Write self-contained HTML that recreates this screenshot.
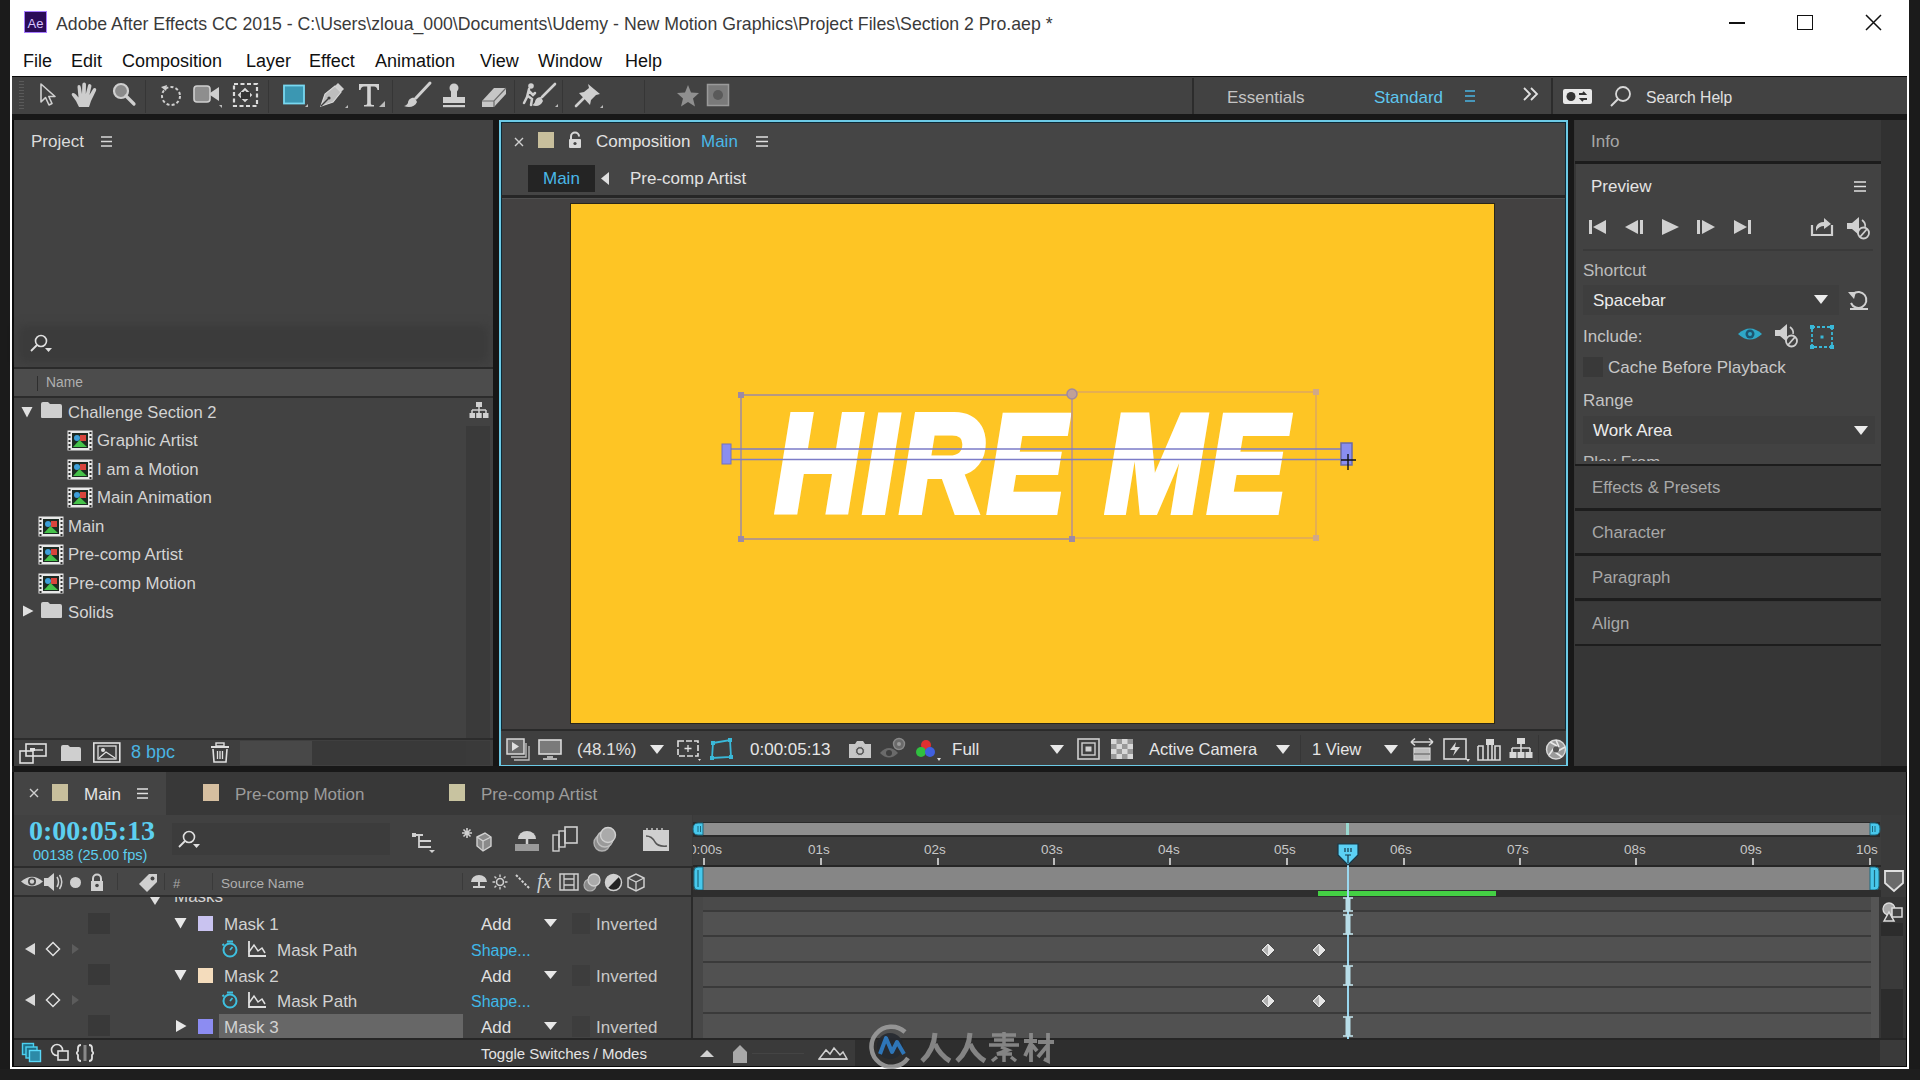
<!DOCTYPE html>
<html><head><meta charset="utf-8">
<style>
*{margin:0;padding:0;box-sizing:border-box}
html,body{width:1920px;height:1080px;overflow:hidden;background:#1e1e1e;font-family:"Liberation Sans",sans-serif;position:relative}
.a{position:absolute}
.t{position:absolute;white-space:nowrap;font-family:"Liberation Sans",sans-serif;line-height:1}
</style></head><body>

<div class="a" style="left:0px;top:0px;width:10px;height:1080px;background:#1b1b1b;"></div>
<div class="a" style="left:10px;top:0px;width:1900px;height:1070px;background:#ffffff;"></div>
<div class="a" style="left:1909px;top:0px;width:11px;height:1080px;background:#1b1b1b;"></div>
<div class="a" style="left:0px;top:1069px;width:1920px;height:11px;background:#1e1e1e;"></div>
<div class="a" style="left:12px;top:76px;width:1895px;height:991px;background:#0a0a0a;"></div>
<div class="a" style="left:24px;top:11px;width:23px;height:22px;background:#2b0c58;border:1px solid #a77bff"></div>
<div class="t" style="left:27.5px;top:17.0px;font-size:13px;color:#d9c4ff;">Ae</div>
<div class="t" style="left:56px;top:16.0px;font-size:17.7px;color:#3a3a3a;">Adobe After Effects CC 2015 - C:\Users\zloua_000\Documents\Udemy - New Motion Graphics\Project Files\Section 2 Pro.aep *</div>
<div class="t" style="left:23px;top:51.8px;font-size:18px;color:#101010;">File</div>
<div class="t" style="left:71px;top:51.8px;font-size:18px;color:#101010;">Edit</div>
<div class="t" style="left:122px;top:51.8px;font-size:18px;color:#101010;">Composition</div>
<div class="t" style="left:246px;top:51.8px;font-size:18px;color:#101010;">Layer</div>
<div class="t" style="left:309px;top:51.8px;font-size:18px;color:#101010;">Effect</div>
<div class="t" style="left:375px;top:51.8px;font-size:18px;color:#101010;">Animation</div>
<div class="t" style="left:480px;top:51.8px;font-size:18px;color:#101010;">View</div>
<div class="t" style="left:538px;top:51.8px;font-size:18px;color:#101010;">Window</div>
<div class="t" style="left:625px;top:51.8px;font-size:18px;color:#101010;">Help</div>
<div class="a" style="left:1729px;top:22px;width:16px;height:2px;background:#111;"></div>
<div class="a" style="left:1797px;top:15px;width:16px;height:15px;background:transparent;border:1.5px solid #111"></div>
<svg class="a" style="left:1865px;top:14px;" width="17" height="17" viewBox="0 0 17 17"><path d="M1 1 L16 16 M16 1 L1 16" stroke="#111" stroke-width="1.5"/></svg>
<div class="a" style="left:12px;top:77px;width:1895px;height:37px;background:#424242;"></div>
<div class="a" style="left:12px;top:114px;width:1895px;height:6px;background:#181818;"></div>
<div class="a" style="left:19px;top:81px;width:5px;height:1px;background:#5a5a5a;"></div>
<div class="a" style="left:19px;top:84px;width:5px;height:1px;background:#5a5a5a;"></div>
<div class="a" style="left:19px;top:87px;width:5px;height:1px;background:#5a5a5a;"></div>
<div class="a" style="left:19px;top:90px;width:5px;height:1px;background:#5a5a5a;"></div>
<div class="a" style="left:19px;top:93px;width:5px;height:1px;background:#5a5a5a;"></div>
<div class="a" style="left:19px;top:96px;width:5px;height:1px;background:#5a5a5a;"></div>
<div class="a" style="left:19px;top:99px;width:5px;height:1px;background:#5a5a5a;"></div>
<div class="a" style="left:19px;top:102px;width:5px;height:1px;background:#5a5a5a;"></div>
<div class="a" style="left:19px;top:105px;width:5px;height:1px;background:#5a5a5a;"></div>
<div class="a" style="left:19px;top:108px;width:5px;height:1px;background:#5a5a5a;"></div>
<svg class="a" style="left:38px;top:82px;" width="22" height="26" viewBox="0 0 22 26"><path d="M3 2 L3 20 L7.5 15.5 L11 23 L14 21.5 L10.8 14.5 L17 14.5 Z" fill="none" stroke="#d0d0d0" stroke-width="1.6" stroke-linejoin="round"/></svg>
<svg class="a" style="left:70px;top:81px;" width="30" height="28" viewBox="0 0 30 28"><g fill="#cdcdcd"><path d="M9 26 L6 20 L2 14.5 Q1 12.5 3 12 Q4.5 11.8 6 13.5 L8.5 16.5 L7.5 6 Q7.3 4 9 4 Q10.6 4 10.8 6 L12 13 L12.3 3.5 Q12.4 1.5 14.2 1.5 Q16 1.5 16 3.5 L15.8 13 L18 4.5 Q18.5 2.8 20.2 3.2 Q21.8 3.7 21.4 5.5 L19.4 14 L23 8 Q24 6.5 25.5 7.3 Q26.8 8.2 26 9.8 L21 20 L19 26 Z"/></g></svg>
<svg class="a" style="left:110px;top:81px;" width="28" height="28" viewBox="0 0 28 28"><circle cx="11" cy="10" r="7" fill="#8a8a8a" stroke="#cfcfcf" stroke-width="2.2"/><path d="M16 15 L24 23" stroke="#cfcfcf" stroke-width="3.2" stroke-linecap="round"/></svg>
<div class="a" style="left:145px;top:80px;width:1px;height:33px;background:#363636;"></div>
<svg class="a" style="left:157px;top:81px;" width="28" height="28" viewBox="0 0 28 28"><circle cx="14" cy="15" r="9" fill="none" stroke="#cfcfcf" stroke-width="2" stroke-dasharray="3 2.2"/><path d="M4 6 L10 4 L9 10 Z" fill="#cfcfcf"/></svg>
<svg class="a" style="left:192px;top:82px;" width="32" height="28" viewBox="0 0 32 28"><rect x="2" y="4" width="16" height="16" rx="3" fill="#8e8e8e" stroke="#cfcfcf" stroke-width="1.6"/><path d="M18 11 L27 5 L27 19 L18 13 Z" fill="#cfcfcf"/><path d="M27 23 L30 23 L30 26 Z" fill="#bbb"/></svg>
<svg class="a" style="left:231px;top:81px;" width="30" height="30" viewBox="0 0 30 30"><rect x="3" y="3" width="23" height="22" fill="none" stroke="#dcdcdc" stroke-width="2.2" stroke-dasharray="4 2.5"/><path d="M8 14 L14 8 L20 14 L14 20 Z" fill="none" stroke="#dcdcdc" stroke-width="1.8"/><rect x="10" y="11" width="9" height="7" fill="#333"/></svg>
<div class="a" style="left:268px;top:80px;width:1px;height:33px;background:#363636;"></div>
<svg class="a" style="left:281px;top:83px;" width="28" height="28" viewBox="0 0 28 28"><rect x="3" y="2.5" width="20" height="18" fill="#3b97b2" stroke="#78d8f0" stroke-width="1.8"/><path d="M24 24 L27 21 L27 24 Z" fill="#bbb"/></svg>
<svg class="a" style="left:317px;top:80px;" width="32" height="32" viewBox="0 0 32 32"><path d="M4 26 L8 14 L18 6 L24 12 L16 22 Z" fill="#bdbdbd" stroke="#d8d8d8" stroke-width="1.2"/><path d="M18 6 L21 3 L27 9 L24 12" fill="#d0d0d0"/><path d="M4 26 L11 19" stroke="#3e3e3e" stroke-width="1.5"/><circle cx="12" cy="18" r="1.6" fill="#3e3e3e"/><path d="M28 28 L31 25 L31 28 Z" fill="#bbb"/></svg>
<svg class="a" style="left:357px;top:82px;" width="24" height="26" viewBox="0 0 24 26"><path d="M2 2 H22 V8 H20.5 Q20 4.5 17 4.5 H13.8 V21.5 Q13.8 23 16 23 H17 V24.5 H7 V23 H8 Q10.2 23 10.2 21.5 V4.5 H7 Q4 4.5 3.5 8 H2 Z" fill="#d2d2d2"/></svg>
<svg class="a" style="left:378px;top:100px;" width="8" height="8" viewBox="0 0 8 8"><path d="M1 7 L7 1 L7 7 Z" fill="#bbb"/></svg>
<div class="a" style="left:392px;top:80px;width:1px;height:33px;background:#363636;"></div>
<svg class="a" style="left:401px;top:80px;" width="32" height="32" viewBox="0 0 32 32"><path d="M29 3 L15 18" stroke="#d0d0d0" stroke-width="3" stroke-linecap="round"/><path d="M14 18 C10 17 7 20 7 23 C6 25 4 26 3 26 C8 28 14 27 16 22 Z" fill="#cfcfcf"/></svg>
<svg class="a" style="left:440px;top:80px;" width="30" height="32" viewBox="0 0 30 32"><circle cx="14" cy="8" r="4.5" fill="#cfcfcf"/><path d="M11 11 L17 11 L17 17 L11 17 Z" fill="#cfcfcf"/><rect x="3" y="17" width="22" height="6" fill="#cfcfcf"/><rect x="3" y="25" width="22" height="2.2" fill="#cfcfcf"/></svg>
<svg class="a" style="left:479px;top:82px;" width="30" height="28" viewBox="0 0 30 28"><path d="M3 19 L15 6 L27 6 L27 12 L15 25 L3 25 Z" fill="#c6c6c6"/><path d="M3 19 L15 19 L27 6 M15 19 L15 25" stroke="#6a6a6a" stroke-width="1.2" fill="none"/></svg>
<div class="a" style="left:514px;top:80px;width:1px;height:33px;background:#363636;"></div>
<svg class="a" style="left:522px;top:80px;" width="38" height="32" viewBox="0 0 38 32"><circle cx="9" cy="6" r="2.8" fill="#cfcfcf"/><path d="M7 9 L5 17 L2 23 M7 11 L11 15 L13 13 M6 16 L10 19 L9 25" stroke="#cfcfcf" stroke-width="2.5" fill="none" stroke-linecap="round"/><path d="M33 4 L20 17" stroke="#d0d0d0" stroke-width="2.6" stroke-linecap="round"/><path d="M19 17 C15 17 13 20 13 22 C12 24 11 25 10 25 C14 27 19 26 21 21 Z" fill="#cfcfcf"/><path d="M33 27 L36 24 L36 27 Z" fill="#bbb"/></svg>
<div class="a" style="left:562px;top:80px;width:1px;height:33px;background:#363636;"></div>
<svg class="a" style="left:573px;top:80px;" width="32" height="32" viewBox="0 0 32 32"><path d="M15 4 L27 14 L23 15 L18 20 L17 25 L6 13 L11 12 L16 8 Z" fill="#cfcfcf"/><path d="M11 18 L3 26" stroke="#cfcfcf" stroke-width="2.6" stroke-linecap="round"/><path d="M27 28 L30 25 L30 28 Z" fill="#bbb"/></svg>
<div class="a" style="left:644px;top:80px;width:1px;height:33px;background:#363636;"></div>
<svg class="a" style="left:676px;top:84px;" width="24" height="24" viewBox="0 0 24 24"><path d="M12 1 L15 8.5 L23 9 L17 14.5 L19 22.5 L12 18 L5 22.5 L7 14.5 L1 9 L9 8.5 Z" fill="#8f8f8f"/></svg>
<svg class="a" style="left:706px;top:83px;" width="24" height="24" viewBox="0 0 24 24"><rect x="1.5" y="1.5" width="21" height="21" fill="#7a7a7a" stroke="#9a9a9a" stroke-width="1.5"/><circle cx="12" cy="12" r="5" fill="#5a5a5a"/></svg>
<div class="a" style="left:1192px;top:78px;width:2px;height:36px;background:#2c2c2c;"></div>
<div class="t" style="left:1227px;top:88.6px;font-size:17px;color:#c4c4c4;">Essentials</div>
<div class="t" style="left:1374px;top:88.6px;font-size:17px;color:#5ec6ee;">Standard</div>
<svg class="a" style="left:1464px;top:89px;" width="12" height="14" viewBox="0 0 12 14"><path d="M1 2 H11 M1 7 H11 M1 12 H11" stroke="#4ab4e2" stroke-width="1.6"/></svg>
<svg class="a" style="left:1522px;top:86px;" width="18" height="16" viewBox="0 0 18 16"><path d="M2 2 L8 8 L2 14 M9 2 L15 8 L9 14" stroke="#e0e0e0" stroke-width="1.8" fill="none"/></svg>
<div class="a" style="left:1551px;top:78px;width:2px;height:36px;background:#2c2c2c;"></div>
<svg class="a" style="left:1562px;top:87px;" width="32" height="20" viewBox="0 0 32 20"><rect x="1" y="2" width="29" height="15" rx="2" fill="#e8e8e8"/><circle cx="9" cy="9.5" r="4.5" fill="#333"/><path d="M17 7 L23 7 L21 5 M25 12 L19 12 L21 14" stroke="#333" stroke-width="1.8" fill="none"/></svg>
<svg class="a" style="left:1609px;top:85px;" width="24" height="24" viewBox="0 0 24 24"><circle cx="14" cy="9" r="7" fill="none" stroke="#d8d8d8" stroke-width="1.8"/><path d="M9 14 L2 21" stroke="#d8d8d8" stroke-width="2"/></svg>
<div class="t" style="left:1646px;top:89.7px;font-size:15.7px;color:#e0e0e0;">Search Help</div>
<div class="a" style="left:14px;top:120px;width:479px;height:646px;background:#424242;"></div>
<div class="t" style="left:31px;top:132.6px;font-size:17px;color:#dcdcdc;">Project</div>
<svg class="a" style="left:100px;top:135px;" width="13" height="13" viewBox="0 0 13 13"><path d="M1 2 H12 M1 6.5 H12 M1 11 H12" stroke="#d8d8d8" stroke-width="1.5"/></svg>
<div class="a" style="left:24px;top:331px;width:459px;height:26px;background:#3b3b3b;box-shadow:0 0 8px 5px #3b3b3b"></div>
<svg class="a" style="left:28px;top:332px;" width="32" height="24" viewBox="0 0 32 24"><circle cx="13" cy="9" r="5.5" fill="none" stroke="#e0e0e0" stroke-width="1.6"/><path d="M9 13 L3 19" stroke="#e0e0e0" stroke-width="1.8"/><path d="M17 16 L24 16 L20.5 20 Z" fill="#e0e0e0"/></svg>
<div class="a" style="left:14px;top:367px;width:479px;height:2px;background:#2a2a2a;"></div>
<div class="a" style="left:14px;top:369px;width:479px;height:27px;background:#4c4c4c;"></div>
<div class="a" style="left:37px;top:376px;width:1px;height:15px;background:#2e2e2e;"></div>
<div class="t" style="left:46px;top:376.3px;font-size:13.8px;color:#b0b0b0;">Name</div>
<div class="a" style="left:14px;top:396px;width:479px;height:2px;background:#2c2c2c;"></div>
<div class="a" style="left:466px;top:426px;width:24px;height:312px;background:#3a3a3a;"></div>
<svg class="a" style="left:469px;top:401px;" width="20" height="20" viewBox="0 0 20 20"><rect x="7" y="1" width="6" height="5" fill="#d0d0d0"/><path d="M10 6 V9 M3 9 H17 M3 9 V12 M10 9 V12 M17 9 V12" stroke="#d0d0d0" stroke-width="1.5" fill="none"/><rect x="0.5" y="12" width="5.5" height="5" fill="#d0d0d0"/><rect x="7.2" y="12" width="5.5" height="5" fill="#d0d0d0"/><rect x="14" y="12" width="5.5" height="5" fill="#d0d0d0"/></svg>
<svg class="a" style="left:21px;top:406px;" width="12" height="12" viewBox="0 0 12 12"><path d="M0.5 1 L11.5 1 L6.0 11.5 Z" fill="#e0e0e0"/></svg>
<svg class="a" style="left:40px;top:401px;" width="23" height="18" viewBox="0 0 23 18"><path d="M1 3 Q1 1 3 1 L8 1 L10 3 L20 3 Q22 3 22 5 L22 16 Q22 17 21 17 L2 17 Q1 17 1 16 Z" fill="#cfcfcf"/></svg>
<div class="t" style="left:68px;top:404.9px;font-size:16.6px;color:#d4d4d4;">Challenge Section 2</div>
<svg class="a" style="left:67px;top:430px;" width="26" height="21" viewBox="0 0 26 21"><rect x="0.5" y="0.5" width="25" height="20" fill="#e8e8e8"/><rect x="5" y="3" width="16" height="15" fill="#1c2a22"/><rect x="1.5" y="2" width="2" height="2" fill="#333"/><rect x="22.5" y="2" width="2" height="2" fill="#333"/><rect x="1.5" y="6" width="2" height="2" fill="#333"/><rect x="22.5" y="6" width="2" height="2" fill="#333"/><rect x="1.5" y="10" width="2" height="2" fill="#333"/><rect x="22.5" y="10" width="2" height="2" fill="#333"/><rect x="1.5" y="14" width="2" height="2" fill="#333"/><rect x="22.5" y="14" width="2" height="2" fill="#333"/><rect x="1.5" y="18" width="2" height="2" fill="#333"/><rect x="22.5" y="18" width="2" height="2" fill="#333"/><circle cx="10" cy="8" r="3" fill="#3d9fd8"/><rect x="13" y="5" width="6" height="6" fill="#d8443c"/><path d="M6 17 L12.5 10 L20 17 Z" fill="#46c24a"/></svg>
<div class="t" style="left:97px;top:432.8px;font-size:16.8px;color:#d4d4d4;">Graphic Artist</div>
<svg class="a" style="left:67px;top:459px;" width="26" height="21" viewBox="0 0 26 21"><rect x="0.5" y="0.5" width="25" height="20" fill="#e8e8e8"/><rect x="5" y="3" width="16" height="15" fill="#1c2a22"/><rect x="1.5" y="2" width="2" height="2" fill="#333"/><rect x="22.5" y="2" width="2" height="2" fill="#333"/><rect x="1.5" y="6" width="2" height="2" fill="#333"/><rect x="22.5" y="6" width="2" height="2" fill="#333"/><rect x="1.5" y="10" width="2" height="2" fill="#333"/><rect x="22.5" y="10" width="2" height="2" fill="#333"/><rect x="1.5" y="14" width="2" height="2" fill="#333"/><rect x="22.5" y="14" width="2" height="2" fill="#333"/><rect x="1.5" y="18" width="2" height="2" fill="#333"/><rect x="22.5" y="18" width="2" height="2" fill="#333"/><circle cx="10" cy="8" r="3" fill="#3d9fd8"/><rect x="13" y="5" width="6" height="6" fill="#d8443c"/><path d="M6 17 L12.5 10 L20 17 Z" fill="#46c24a"/></svg>
<div class="t" style="left:97px;top:461.8px;font-size:16.8px;color:#d4d4d4;">I am a Motion</div>
<svg class="a" style="left:67px;top:487px;" width="26" height="21" viewBox="0 0 26 21"><rect x="0.5" y="0.5" width="25" height="20" fill="#e8e8e8"/><rect x="5" y="3" width="16" height="15" fill="#1c2a22"/><rect x="1.5" y="2" width="2" height="2" fill="#333"/><rect x="22.5" y="2" width="2" height="2" fill="#333"/><rect x="1.5" y="6" width="2" height="2" fill="#333"/><rect x="22.5" y="6" width="2" height="2" fill="#333"/><rect x="1.5" y="10" width="2" height="2" fill="#333"/><rect x="22.5" y="10" width="2" height="2" fill="#333"/><rect x="1.5" y="14" width="2" height="2" fill="#333"/><rect x="22.5" y="14" width="2" height="2" fill="#333"/><rect x="1.5" y="18" width="2" height="2" fill="#333"/><rect x="22.5" y="18" width="2" height="2" fill="#333"/><circle cx="10" cy="8" r="3" fill="#3d9fd8"/><rect x="13" y="5" width="6" height="6" fill="#d8443c"/><path d="M6 17 L12.5 10 L20 17 Z" fill="#46c24a"/></svg>
<div class="t" style="left:97px;top:489.8px;font-size:16.8px;color:#d4d4d4;">Main Animation</div>
<svg class="a" style="left:38px;top:516px;" width="26" height="21" viewBox="0 0 26 21"><rect x="0.5" y="0.5" width="25" height="20" fill="#e8e8e8"/><rect x="5" y="3" width="16" height="15" fill="#1c2a22"/><rect x="1.5" y="2" width="2" height="2" fill="#333"/><rect x="22.5" y="2" width="2" height="2" fill="#333"/><rect x="1.5" y="6" width="2" height="2" fill="#333"/><rect x="22.5" y="6" width="2" height="2" fill="#333"/><rect x="1.5" y="10" width="2" height="2" fill="#333"/><rect x="22.5" y="10" width="2" height="2" fill="#333"/><rect x="1.5" y="14" width="2" height="2" fill="#333"/><rect x="22.5" y="14" width="2" height="2" fill="#333"/><rect x="1.5" y="18" width="2" height="2" fill="#333"/><rect x="22.5" y="18" width="2" height="2" fill="#333"/><circle cx="10" cy="8" r="3" fill="#3d9fd8"/><rect x="13" y="5" width="6" height="6" fill="#d8443c"/><path d="M6 17 L12.5 10 L20 17 Z" fill="#46c24a"/></svg>
<div class="t" style="left:68px;top:518.8px;font-size:16.8px;color:#d4d4d4;">Main</div>
<svg class="a" style="left:38px;top:544px;" width="26" height="21" viewBox="0 0 26 21"><rect x="0.5" y="0.5" width="25" height="20" fill="#e8e8e8"/><rect x="5" y="3" width="16" height="15" fill="#1c2a22"/><rect x="1.5" y="2" width="2" height="2" fill="#333"/><rect x="22.5" y="2" width="2" height="2" fill="#333"/><rect x="1.5" y="6" width="2" height="2" fill="#333"/><rect x="22.5" y="6" width="2" height="2" fill="#333"/><rect x="1.5" y="10" width="2" height="2" fill="#333"/><rect x="22.5" y="10" width="2" height="2" fill="#333"/><rect x="1.5" y="14" width="2" height="2" fill="#333"/><rect x="22.5" y="14" width="2" height="2" fill="#333"/><rect x="1.5" y="18" width="2" height="2" fill="#333"/><rect x="22.5" y="18" width="2" height="2" fill="#333"/><circle cx="10" cy="8" r="3" fill="#3d9fd8"/><rect x="13" y="5" width="6" height="6" fill="#d8443c"/><path d="M6 17 L12.5 10 L20 17 Z" fill="#46c24a"/></svg>
<div class="t" style="left:68px;top:546.8px;font-size:16.8px;color:#d4d4d4;">Pre-comp Artist</div>
<svg class="a" style="left:38px;top:573px;" width="26" height="21" viewBox="0 0 26 21"><rect x="0.5" y="0.5" width="25" height="20" fill="#e8e8e8"/><rect x="5" y="3" width="16" height="15" fill="#1c2a22"/><rect x="1.5" y="2" width="2" height="2" fill="#333"/><rect x="22.5" y="2" width="2" height="2" fill="#333"/><rect x="1.5" y="6" width="2" height="2" fill="#333"/><rect x="22.5" y="6" width="2" height="2" fill="#333"/><rect x="1.5" y="10" width="2" height="2" fill="#333"/><rect x="22.5" y="10" width="2" height="2" fill="#333"/><rect x="1.5" y="14" width="2" height="2" fill="#333"/><rect x="22.5" y="14" width="2" height="2" fill="#333"/><rect x="1.5" y="18" width="2" height="2" fill="#333"/><rect x="22.5" y="18" width="2" height="2" fill="#333"/><circle cx="10" cy="8" r="3" fill="#3d9fd8"/><rect x="13" y="5" width="6" height="6" fill="#d8443c"/><path d="M6 17 L12.5 10 L20 17 Z" fill="#46c24a"/></svg>
<div class="t" style="left:68px;top:575.8px;font-size:16.8px;color:#d4d4d4;">Pre-comp Motion</div>
<svg class="a" style="left:22px;top:605px;" width="12" height="12" viewBox="0 0 12 12"><path d="M1 0.5 L11.5 6.0 L1 11.5 Z" fill="#e0e0e0"/></svg>
<svg class="a" style="left:40px;top:601px;" width="23" height="18" viewBox="0 0 23 18"><path d="M1 3 Q1 1 3 1 L8 1 L10 3 L20 3 Q22 3 22 5 L22 16 Q22 17 21 17 L2 17 Q1 17 1 16 Z" fill="#cfcfcf"/></svg>
<div class="t" style="left:68px;top:604.8px;font-size:16.8px;color:#d4d4d4;">Solids</div>
<div class="a" style="left:14px;top:738px;width:479px;height:2px;background:#2c2c2c;"></div>
<div class="a" style="left:14px;top:740px;width:479px;height:26px;background:#3f3f3f;"></div>
<div class="a" style="left:240px;top:741px;width:72px;height:24px;background:#484848;"></div>
<div class="a" style="left:312px;top:741px;width:154px;height:24px;background:#393939;"></div>
<div class="a" style="left:466px;top:741px;width:24px;height:24px;background:#3a3a3a;"></div>
<svg class="a" style="left:18px;top:742px;" width="30" height="22" viewBox="0 0 30 22"><rect x="8" y="2" width="20" height="12" fill="none" stroke="#e0e0e0" stroke-width="1.6"/><rect x="12" y="6" width="5" height="3" fill="#e0e0e0"/><path d="M15 8 H25" stroke="#e0e0e0" stroke-width="1.4"/><rect x="2" y="9" width="13" height="12" fill="none" stroke="#e0e0e0" stroke-width="1.6"/></svg>
<svg class="a" style="left:60px;top:744px;" width="22" height="19" viewBox="0 0 22 19"><path d="M1 3 Q1 1 3 1 L8 1 L10 3 L19 3 Q21 3 21 5 L21 17 L1 17 Z" fill="#cfcfcf"/></svg>
<svg class="a" style="left:93px;top:742px;" width="28" height="21" viewBox="0 0 28 21"><rect x="0.8" y="1" width="26" height="19" fill="none" stroke="#e0e0e0" stroke-width="1.6"/><rect x="5" y="4" width="18" height="13" fill="none" stroke="#e0e0e0" stroke-width="1.3"/><circle cx="10" cy="8" r="2" fill="#e0e0e0"/><path d="M6 16 L13 10 L22 16" stroke="#e0e0e0" fill="none" stroke-width="1.3"/></svg>
<div class="t" style="left:131px;top:742.8px;font-size:18px;color:#4ab4e2;">8 bpc</div>
<svg class="a" style="left:209px;top:742px;" width="22" height="21" viewBox="0 0 22 21"><rect x="7" y="1" width="8" height="3" fill="none" stroke="#e0e0e0" stroke-width="1.4"/><path d="M2 5 H20" stroke="#e0e0e0" stroke-width="2"/><path d="M4 7 L5 20 L17 20 L18 7" fill="none" stroke="#e0e0e0" stroke-width="1.6"/><path d="M8.5 9 V17 M11 9 V17 M13.5 9 V17" stroke="#e0e0e0" stroke-width="1.3"/></svg>
<div class="a" style="left:493px;top:120px;width:6px;height:647px;background:#161616;"></div>
<div class="a" style="left:499px;top:120px;width:1069px;height:647px;background:#6ccae6;"></div>
<div class="a" style="left:501px;top:122px;width:1065px;height:643px;background:#0e2a36;"></div>
<div class="a" style="left:502px;top:123px;width:1063px;height:641px;background:#3c3c3c;"></div>
<div class="a" style="left:502px;top:123px;width:1063px;height:73px;background:#454545;"></div>
<svg class="a" style="left:513px;top:136px;" width="12" height="12" viewBox="0 0 12 12"><path d="M2 2 L10 10 M10 2 L2 10" stroke="#d0d0d0" stroke-width="1.4"/></svg>
<div class="a" style="left:538px;top:132px;width:16px;height:16px;background:#c8bf9c;"></div>
<svg class="a" style="left:566px;top:131px;" width="18" height="18" viewBox="0 0 18 18"><path d="M5 8 V5.5 A4 4 0 0 1 13 5.5" fill="none" stroke="#d8d8d8" stroke-width="2"/><rect x="3" y="8" width="12" height="9" rx="1" fill="#d8d8d8"/><circle cx="9" cy="12.5" r="1.6" fill="#454545"/></svg>
<div class="t" style="left:596px;top:132.6px;font-size:17px;color:#e2e2e2;">Composition</div>
<div class="t" style="left:701px;top:132.6px;font-size:17px;color:#4ab8e8;">Main</div>
<svg class="a" style="left:755px;top:135px;" width="14" height="13" viewBox="0 0 14 13"><path d="M1 2 H13 M1 6.5 H13 M1 11 H13" stroke="#e0e0e0" stroke-width="1.5"/></svg>
<div class="a" style="left:528px;top:165px;width:67px;height:27px;background:#242424;"></div>
<div class="t" style="left:543px;top:169.6px;font-size:17px;color:#4ab8e8;">Main</div>
<svg class="a" style="left:600px;top:171px;" width="10" height="15" viewBox="0 0 10 15"><path d="M9 1 L1 7.5 L9 14 Z" fill="#e0e0e0"/></svg>
<div class="t" style="left:630px;top:169.6px;font-size:17px;color:#e2e2e2;">Pre-comp Artist</div>
<div class="a" style="left:501px;top:195px;width:1065px;height:3px;background:#262626;"></div>
<div class="a" style="left:502px;top:198px;width:1063px;height:531px;background:#434141;"></div>
<div class="a" style="left:570px;top:203px;width:925px;height:521px;background:#2a2618;"></div>
<div class="a" style="left:571px;top:204px;width:923px;height:519px;background:#fec524;"></div>
<div class="a" style="left:502px;top:198px;width:1063px;height:1px;background:#505050;"></div>
<div class="t" style="left:776px;top:395px;font-size:137px;font-weight:bold;font-style:italic;color:#fff;transform:scaleX(0.836);transform-origin:0 0;-webkit-text-stroke:8px #fff;letter-spacing:6px">HIRE</div>
<div class="t" style="left:1106px;top:395px;font-size:137px;font-weight:bold;font-style:italic;color:#fff;transform:scaleX(0.852);transform-origin:0 0;-webkit-text-stroke:8px #fff;letter-spacing:6px">ME</div>
<svg class="a" style="left:715px;top:380px;" width="660" height="170" viewBox="0 0 660 170"><rect x="26" y="15" width="331" height="144" fill="none" stroke="#a08aa0" stroke-width="1.5"/><rect x="357" y="12" width="244" height="146" fill="none" stroke="#d4a070" stroke-width="1.2"/><path d="M11 69 H633 M11 79.5 H633" stroke="#7c7cc8" stroke-width="1.5"/><rect x="23" y="12" width="6" height="6" fill="#9c8aa6"/><rect x="23" y="156" width="6" height="6" fill="#9c8aa6"/><rect x="354" y="156" width="6" height="6" fill="#9c8aa6"/><circle cx="357" cy="14" r="5" fill="#c0a098" stroke="#a08aa0" stroke-width="1.5"/><rect x="598" y="9" width="6" height="6" fill="#d0a888"/><rect x="598" y="155" width="6" height="6" fill="#d0a888"/><rect x="7" y="64" width="9" height="20" fill="#8a8ef0" stroke="#7070c0" stroke-width="1"/><rect x="626" y="63" width="11" height="22" fill="#8a8ef0" stroke="#6a6aa8" stroke-width="1.5"/><path d="M633 74 V90 M626 80 H641" stroke="#111" stroke-width="1.4"/></svg>
<div class="a" style="left:501px;top:729px;width:1065px;height:2px;background:#2a2a2a;"></div>
<div class="a" style="left:501px;top:731px;width:1065px;height:34px;background:#3f3f3f;"></div>
<svg class="a" style="left:506px;top:738px;" width="26" height="24" viewBox="0 0 26 24"><rect x="1" y="1" width="17" height="15" fill="#6a6a6a" stroke="#d8d8d8" stroke-width="1.5"/><path d="M6 4 L13 8.5 L6 13 Z" fill="#e0e0e0"/><path d="M20 5 V19 H5 M23 8 V22 H8" stroke="#bdbdbd" stroke-width="1.4" fill="none"/></svg>
<svg class="a" style="left:538px;top:739px;" width="24" height="21" viewBox="0 0 24 21"><rect x="1" y="1" width="22" height="14" fill="#7a7a7a" stroke="#dadada" stroke-width="1.6"/><path d="M9 18 H15 M5 20 H19" stroke="#dadada" stroke-width="1.6"/></svg>
<div class="t" style="left:577px;top:740.6px;font-size:17px;color:#e0e0e0;">(48.1%)</div>
<svg class="a" style="left:649px;top:744px;" width="16" height="11" viewBox="0 0 16 11"><path d="M1 1 L15 1 L8 10 Z" fill="#e8e8e8"/></svg>
<svg class="a" style="left:676px;top:738px;" width="26" height="24" viewBox="0 0 26 24"><rect x="2" y="3" width="20" height="15" fill="none" stroke="#e0e0e0" stroke-width="1.6" stroke-dasharray="6 2"/><path d="M12 7 V14 M8.5 10.5 H15.5" stroke="#e0e0e0" stroke-width="1.3"/><path d="M22 21 L25 21 L23.5 23 Z" fill="#e0e0e0"/></svg>
<svg class="a" style="left:709px;top:737px;" width="26" height="25" viewBox="0 0 26 25"><path d="M4 6 L21 3 L22 20 L3 21 Z" fill="none" stroke="#3ab8d8" stroke-width="1.8"/><rect x="2" y="4" width="4" height="4" fill="#3ab8d8"/><rect x="19" y="1" width="4" height="4" fill="#3ab8d8"/><rect x="20" y="18" width="4" height="4" fill="#3ab8d8"/><rect x="1" y="19" width="4" height="4" fill="#3ab8d8"/></svg>
<div class="t" style="left:750px;top:740.6px;font-size:17px;color:#e6e6e6;">0:00:05:13</div>
<svg class="a" style="left:847px;top:739px;" width="26" height="21" viewBox="0 0 26 21"><path d="M2 5 H8 L10 2 H16 L18 5 H24 V19 H2 Z" fill="#c6c6c6"/><circle cx="13" cy="12" r="4.5" fill="#555" stroke="#c6c6c6" stroke-width="1"/><circle cx="13" cy="12" r="2.5" fill="#c6c6c6"/></svg>
<svg class="a" style="left:878px;top:737px;" width="30" height="25" viewBox="0 0 30 25"><path d="M2 16 Q11 6 20 16 Q11 25 2 16 Z" fill="#6a6a6a"/><circle cx="11" cy="16" r="3" fill="#3f3f3f"/><circle cx="21" cy="7" r="5.5" fill="#6a6a6a" stroke="#8a8a8a" stroke-width="1.4"/><circle cx="21" cy="7" r="2" fill="#9a9a9a"/></svg>
<svg class="a" style="left:913px;top:737px;" width="30" height="26" viewBox="0 0 30 26"><circle cx="13" cy="8" r="5" fill="#e03030"/><circle cx="8" cy="15" r="5" fill="#30c040"/><circle cx="17" cy="15" r="5" fill="#4060e0"/><path d="M24 21 L28 21 L26 24 Z" fill="#e0e0e0"/></svg>
<div class="t" style="left:952px;top:740.6px;font-size:17px;color:#e6e6e6;">Full</div>
<svg class="a" style="left:1049px;top:744px;" width="16" height="11" viewBox="0 0 16 11"><path d="M1 1 L15 1 L8 10 Z" fill="#e8e8e8"/></svg>
<svg class="a" style="left:1077px;top:738px;" width="24" height="23" viewBox="0 0 24 23"><rect x="1" y="1" width="21" height="20" fill="none" stroke="#d0d0d0" stroke-width="1.6"/><rect x="5" y="5" width="13" height="12" fill="none" stroke="#d0d0d0" stroke-width="1.4"/><rect x="8.5" y="8.5" width="6" height="5" fill="#d0d0d0"/></svg>
<svg class="a" style="left:1110px;top:738px;" width="24" height="22" viewBox="0 0 24 22"><rect x="1" y="1" width="22" height="20" fill="#999"/><rect x="1.0" y="1" width="5.5" height="5" fill="#d8d8d8"/><rect x="12.0" y="1" width="5.5" height="5" fill="#d8d8d8"/><rect x="6.5" y="6" width="5.5" height="5" fill="#d8d8d8"/><rect x="17.5" y="6" width="5.5" height="5" fill="#d8d8d8"/><rect x="1.0" y="11" width="5.5" height="5" fill="#d8d8d8"/><rect x="12.0" y="11" width="5.5" height="5" fill="#d8d8d8"/><rect x="6.5" y="16" width="5.5" height="5" fill="#d8d8d8"/><rect x="17.5" y="16" width="5.5" height="5" fill="#d8d8d8"/></svg>
<div class="t" style="left:1149px;top:741.0px;font-size:16.5px;color:#e6e6e6;">Active Camera</div>
<svg class="a" style="left:1275px;top:744px;" width="16" height="11" viewBox="0 0 16 11"><path d="M1 1 L15 1 L8 10 Z" fill="#e8e8e8"/></svg>
<div class="a" style="left:1300px;top:735px;width:1px;height:28px;background:#363636;"></div>
<div class="t" style="left:1312px;top:741.0px;font-size:16.5px;color:#e6e6e6;">1 View</div>
<svg class="a" style="left:1383px;top:744px;" width="16" height="11" viewBox="0 0 16 11"><path d="M1 1 L15 1 L8 10 Z" fill="#e8e8e8"/></svg>
<svg class="a" style="left:1409px;top:737px;" width="26" height="25" viewBox="0 0 26 25"><path d="M2 5 H24 M2 5 L6 1.5 M2 5 L6 8.5 M24 5 L20 1.5 M24 5 L20 8.5" stroke="#d8d8d8" stroke-width="1.6" fill="none"/><rect x="5" y="11" width="16" height="12" fill="#bdbdbd" stroke="#d8d8d8" stroke-width="1.2"/><path d="M5 17 H21" stroke="#666" stroke-width="1.2"/></svg>
<svg class="a" style="left:1443px;top:737px;" width="28" height="26" viewBox="0 0 28 26"><rect x="1" y="2" width="22" height="20" fill="none" stroke="#d8d8d8" stroke-width="1.6"/><path d="M13 5 L7 13 H12 L10 19 L17 10 H12 Z" fill="#d8d8d8"/><path d="M23 22 L27 22 L25 25 Z" fill="#e0e0e0"/></svg>
<svg class="a" style="left:1476px;top:737px;" width="26" height="25" viewBox="0 0 26 25"><path d="M2 9 V23 H24 V9 H19 V23 M2 9 H7 V23 M12 4 H16 V23 H12 Z" stroke="#d8d8d8" stroke-width="1.6" fill="none"/><rect x="10" y="2" width="8" height="6" fill="#d8d8d8"/></svg>
<svg class="a" style="left:1509px;top:737px;" width="24" height="25" viewBox="0 0 24 25"><rect x="8" y="1" width="8" height="6" fill="#d8d8d8"/><path d="M12 7 V11 M3 11 H21 M3 11 V15 M12 11 V15 M21 11 V15" stroke="#d8d8d8" stroke-width="1.6" fill="none"/><rect x="0.5" y="15" width="7" height="6" fill="#d8d8d8"/><rect x="8.5" y="15" width="7" height="6" fill="#d8d8d8"/><rect x="16.5" y="15" width="7" height="6" fill="#d8d8d8"/></svg>
<div class="a" style="left:1538px;top:735px;width:1px;height:28px;background:#363636;"></div>
<svg class="a" style="left:1545px;top:737px;" width="22" height="25" viewBox="0 0 22 25"><circle cx="11" cy="12.5" r="9.5" fill="#9a9a9a" stroke="#d8d8d8" stroke-width="1.4"/><path d="M11 3 L14 10 M20 10 L13 14 M17 20 L10 15 M4 18 L9 11 M5 5 L12 9" stroke="#e8e8e8" stroke-width="1.6"/><circle cx="11" cy="12.5" r="3" fill="#555"/></svg>
<div class="a" style="left:1568px;top:120px;width:6px;height:647px;background:#181818;"></div>
<div class="a" style="left:1574px;top:120px;width:307px;height:646px;background:#363636;"></div>
<div class="a" style="left:1881px;top:120px;width:26px;height:646px;background:#313131;"></div>
<div class="a" style="left:1575px;top:120px;width:306px;height:41px;background:#393939;"></div>
<div class="t" style="left:1591px;top:132.6px;font-size:17px;color:#a6a6a6;">Info</div>
<div class="a" style="left:1575px;top:161px;width:306px;height:3px;background:#1c1c1c;"></div>
<div class="a" style="left:1576px;top:164px;width:305px;height:300px;background:#424242;"></div>
<div class="t" style="left:1591px;top:177.6px;font-size:17px;color:#e4e4e4;">Preview</div>
<svg class="a" style="left:1853px;top:180px;" width="14" height="13" viewBox="0 0 14 13"><path d="M1 2 H13 M1 6.5 H13 M1 11 H13" stroke="#e0e0e0" stroke-width="1.5"/></svg>
<svg class="a" style="left:1588px;top:218px;" width="20" height="18" viewBox="0 0 20 18"><rect x="1" y="2" width="3" height="14" fill="#d0d0d0"/><path d="M18 2 L5 9 L18 16 Z" fill="#d0d0d0"/></svg>
<svg class="a" style="left:1624px;top:218px;" width="22" height="18" viewBox="0 0 22 18"><path d="M14 2 L1 9 L14 16 Z" fill="#d0d0d0"/><rect x="16" y="2" width="3" height="14" fill="#d0d0d0"/></svg>
<svg class="a" style="left:1660px;top:217px;" width="22" height="20" viewBox="0 0 22 20"><path d="M2 2 L19 10 L2 18 Z" fill="#d0d0d0"/></svg>
<svg class="a" style="left:1696px;top:218px;" width="22" height="18" viewBox="0 0 22 18"><rect x="1" y="2" width="3" height="14" fill="#d0d0d0"/><path d="M6 2 L19 9 L6 16 Z" fill="#d0d0d0"/></svg>
<svg class="a" style="left:1733px;top:218px;" width="20" height="18" viewBox="0 0 20 18"><path d="M1 2 L14 9 L1 16 Z" fill="#d0d0d0"/><rect x="15" y="2" width="3" height="14" fill="#d0d0d0"/></svg>
<svg class="a" style="left:1810px;top:216px;" width="24" height="22" viewBox="0 0 24 22"><path d="M2 9 V19 H22 V9" stroke="#d0d0d0" stroke-width="2.2" fill="none"/><path d="M6 15 L6 11 Q8 6 14 6 L14 2 L21 8 L14 13 L14 10 Q9 10 6 15 Z" fill="#d0d0d0"/></svg>
<svg class="a" style="left:1845px;top:214px;" width="28" height="28" viewBox="0 0 28 28"><path d="M2 9 H7 L14 3 V21 L7 15 H2 Z" fill="#d0d0d0"/><path d="M17 6 Q21 9 20 13" stroke="#d0d0d0" stroke-width="1.6" fill="none"/><circle cx="18.5" cy="19" r="5.5" fill="#424242" stroke="#d0d0d0" stroke-width="1.8"/><path d="M15 23 L22 15" stroke="#d0d0d0" stroke-width="1.8"/></svg>
<div class="a" style="left:1583px;top:249px;width:290px;height:2px;background:#3a3a3a;"></div>
<div class="t" style="left:1583px;top:261.6px;font-size:17px;color:#bcbcbc;">Shortcut</div>
<div class="a" style="left:1583px;top:285px;width:256px;height:30px;background:#3e3e3e;"></div>
<div class="t" style="left:1593px;top:291.6px;font-size:17px;color:#ececec;">Spacebar</div>
<svg class="a" style="left:1813px;top:294px;" width="16" height="11" viewBox="0 0 16 11"><path d="M1 1 L15 1 L8 10 Z" fill="#ececec"/></svg>
<svg class="a" style="left:1846px;top:288px;" width="26" height="24" viewBox="0 0 26 24"><path d="M7 6 A8 8 0 1 1 5 15" stroke="#d0d0d0" stroke-width="2" fill="none"/><path d="M2 4 L10 4 L8 11 Z" fill="#d0d0d0"/><path d="M4 21 H22" stroke="#d0d0d0" stroke-width="2"/></svg>
<div class="t" style="left:1583px;top:327.6px;font-size:17px;color:#c4c4c4;">Include:</div>
<svg class="a" style="left:1737px;top:325px;" width="26" height="18" viewBox="0 0 26 18"><path d="M1 9 Q13 -2 25 9 Q13 20 1 9 Z" fill="#2fa8c8"/><circle cx="13" cy="9" r="4.5" fill="#1d5570"/><circle cx="13" cy="9" r="2" fill="#2fa8c8"/></svg>
<svg class="a" style="left:1773px;top:322px;" width="26" height="28" viewBox="0 0 26 28"><path d="M2 8 H7 L14 2 V20 L7 14 H2 Z" fill="#d0d0d0"/><path d="M17 5 Q21 8 20 12" stroke="#d0d0d0" stroke-width="1.6" fill="none"/><circle cx="18.5" cy="19" r="5.5" fill="#424242" stroke="#d0d0d0" stroke-width="1.8"/><path d="M15 23 L22 15" stroke="#d0d0d0" stroke-width="1.8"/></svg>
<svg class="a" style="left:1809px;top:324px;" width="26" height="26" viewBox="0 0 26 26"><rect x="3" y="3" width="20" height="20" fill="none" stroke="#3ab8d8" stroke-width="1.8" stroke-dasharray="3 2"/><rect x="1" y="1" width="4" height="4" fill="#3ab8d8"/><rect x="21" y="1" width="4" height="4" fill="#3ab8d8"/><rect x="1" y="21" width="4" height="4" fill="#3ab8d8"/><rect x="21" y="21" width="4" height="4" fill="#3ab8d8"/><rect x="11.5" y="11.5" width="3" height="3" fill="#3ab8d8"/></svg>
<div class="a" style="left:1583px;top:357px;width:20px;height:20px;background:#393939;"></div>
<div class="t" style="left:1608px;top:358.6px;font-size:17px;color:#c8c8c8;">Cache Before Playback</div>
<div class="t" style="left:1583px;top:391.6px;font-size:17px;color:#c4c4c4;">Range</div>
<div class="a" style="left:1583px;top:416px;width:292px;height:28px;background:#3e3e3e;"></div>
<div class="t" style="left:1593px;top:421.6px;font-size:17px;color:#ececec;">Work Area</div>
<svg class="a" style="left:1853px;top:425px;" width="16" height="11" viewBox="0 0 16 11"><path d="M1 1 L15 1 L8 10 Z" fill="#ececec"/></svg>
<div class="a" style="left:1583px;top:452px;width:120px;height:9px;overflow:hidden"><div class="t" style="left:0;top:2px;font-size:17px;color:#bcbcbc">Play From</div></div>
<div class="a" style="left:1575px;top:464px;width:306px;height:2px;background:#1c1c1c;"></div>
<div class="a" style="left:1575px;top:466px;width:306px;height:42px;background:#393939;"></div>
<div class="a" style="left:1575px;top:508px;width:306px;height:3px;background:#1d1d1d;"></div>
<div class="t" style="left:1592px;top:479.8px;font-size:16.8px;color:#a8a8a8;">Effects &amp; Presets</div>
<div class="a" style="left:1575px;top:511px;width:306px;height:42px;background:#393939;"></div>
<div class="a" style="left:1575px;top:553px;width:306px;height:3px;background:#1d1d1d;"></div>
<div class="t" style="left:1592px;top:524.8px;font-size:16.8px;color:#a8a8a8;">Character</div>
<div class="a" style="left:1575px;top:556px;width:306px;height:42px;background:#393939;"></div>
<div class="a" style="left:1575px;top:598px;width:306px;height:3px;background:#1d1d1d;"></div>
<div class="t" style="left:1592px;top:569.8px;font-size:16.8px;color:#a8a8a8;">Paragraph</div>
<div class="a" style="left:1575px;top:602px;width:306px;height:42px;background:#393939;"></div>
<div class="a" style="left:1575px;top:644px;width:306px;height:3px;background:#1d1d1d;"></div>
<div class="t" style="left:1592px;top:615.8px;font-size:16.8px;color:#a8a8a8;">Align</div>
<div class="a" style="left:1575px;top:646px;width:306px;height:120px;background:#363636;"></div>
<div class="a" style="left:12px;top:766px;width:1895px;height:6px;background:#181818;"></div>
<div class="a" style="left:14px;top:772px;width:1892px;height:294px;background:#3a3a3a;"></div>
<div class="a" style="left:14px;top:772px;width:152px;height:43px;background:#444444;"></div>
<div class="a" style="left:166px;top:772px;width:1740px;height:43px;background:#383838;"></div>
<svg class="a" style="left:28px;top:787px;" width="12" height="12" viewBox="0 0 12 12"><path d="M2 2 L10 10 M10 2 L2 10" stroke="#d0d0d0" stroke-width="1.4"/></svg>
<div class="a" style="left:52px;top:784px;width:16px;height:17px;background:#c8bf9c;"></div>
<div class="t" style="left:84px;top:785.6px;font-size:17px;color:#e4e4e4;">Main</div>
<svg class="a" style="left:136px;top:787px;" width="13" height="13" viewBox="0 0 13 13"><path d="M1 2 H12 M1 6.5 H12 M1 11 H12" stroke="#e0e0e0" stroke-width="1.5"/></svg>
<div class="a" style="left:203px;top:784px;width:16px;height:17px;background:#d6bfa0;"></div>
<div class="t" style="left:235px;top:785.6px;font-size:17px;color:#9c9c9c;">Pre-comp Motion</div>
<div class="a" style="left:449px;top:784px;width:16px;height:17px;background:#c8c3a0;"></div>
<div class="t" style="left:481px;top:785.6px;font-size:17px;color:#9c9c9c;">Pre-comp Artist</div>
<div class="a" style="left:14px;top:815px;width:678px;height:53px;background:#414141;"></div>
<div class="t" style="left:29px;top:816.5px;font-size:28px;font-weight:bold;color:#5ccff0;font-family:'Liberation Serif',serif">0:00:05:13</div>
<div class="t" style="left:33px;top:847.6px;font-size:14.6px;color:#5ccff0;">00138 (25.00 fps)</div>
<div class="a" style="left:172px;top:823px;width:218px;height:32px;background:#3c3c3c;"></div>
<svg class="a" style="left:176px;top:828px;" width="32" height="24" viewBox="0 0 32 24"><circle cx="13" cy="9" r="5.5" fill="none" stroke="#e0e0e0" stroke-width="1.6"/><path d="M9 13 L3 19" stroke="#e0e0e0" stroke-width="1.8"/><path d="M17 16 L24 16 L20.5 20 Z" fill="#e0e0e0"/></svg>
<svg class="a" style="left:411px;top:830px;" width="28" height="24" viewBox="0 0 28 24"><path d="M2 5 H12 M8 5 V11 H20 M8 11 V17 H20" stroke="#d0d0d0" stroke-width="1.8" fill="none"/><rect x="1" y="3" width="4" height="4" fill="#d0d0d0"/><path d="M18 20 L24 20 L21 23 Z" fill="#d0d0d0"/></svg>
<svg class="a" style="left:460px;top:826px;" width="32" height="28" viewBox="0 0 32 28"><path d="M7 2 V12 M2 7 H12 M3.5 3.5 L10.5 10.5 M10.5 3.5 L3.5 10.5" stroke="#d0d0d0" stroke-width="1.6"/><path d="M17 11 L25 7 L31 11 L31 20 L23 25 L17 20 Z" fill="#8a8a8a" stroke="#d0d0d0" stroke-width="1.4"/><path d="M17 11 L23 15 L31 11 M23 15 V25" stroke="#d0d0d0" stroke-width="1.3" fill="none"/></svg>
<svg class="a" style="left:512px;top:827px;" width="30" height="26" viewBox="0 0 30 26"><path d="M6 12 A9 8 0 0 1 24 12 Z" fill="#d0d0d0"/><path d="M15 12 V19" stroke="#d0d0d0" stroke-width="2.5"/><rect x="3" y="17" width="24" height="7" fill="#9a9a9a"/></svg>
<svg class="a" style="left:551px;top:826px;" width="30" height="28" viewBox="0 0 30 28"><rect x="2" y="9" width="6" height="16" fill="none" stroke="#d0d0d0" stroke-width="1.4"/><rect x="8" y="5" width="6" height="16" fill="none" stroke="#d0d0d0" stroke-width="1.4"/><rect x="14" y="1" width="12" height="16" fill="none" stroke="#d0d0d0" stroke-width="1.6"/></svg>
<svg class="a" style="left:590px;top:826px;" width="30" height="28" viewBox="0 0 30 28"><circle cx="12" cy="17" r="8" fill="#8a8a8a" stroke="#b0b0b0" stroke-width="1.4"/><circle cx="15" cy="13" r="8" fill="#9a9a9a" stroke="#c0c0c0" stroke-width="1.4"/><circle cx="18" cy="9" r="7.5" fill="#aaa" stroke="#d0d0d0" stroke-width="1.4"/></svg>
<svg class="a" style="left:641px;top:826px;" width="30" height="28" viewBox="0 0 30 28"><rect x="2" y="4" width="26" height="21" fill="#cfcfcf"/><path d="M5 10 Q11 10 14 16 Q17 21 26 20" stroke="#555" stroke-width="1.5" fill="none"/><path d="M6 2 V6 M11 2 V6 M16 2 V6 M21 2 V6" stroke="#d0d0d0" stroke-width="1.4"/></svg>
<div class="a" style="left:14px;top:866px;width:678px;height:2px;background:#2c2c2c;"></div>
<div class="a" style="left:14px;top:868px;width:678px;height:27px;background:#474747;"></div>
<svg class="a" style="left:20px;top:873px;" width="24" height="17" viewBox="0 0 24 17"><path d="M1 8.5 Q12 -1 23 8.5 Q12 18 1 8.5 Z" fill="#cfcfcf"/><circle cx="12" cy="8.5" r="4" fill="#474747"/><circle cx="12" cy="8.5" r="2.2" fill="#cfcfcf"/></svg>
<svg class="a" style="left:43px;top:872px;" width="20" height="20" viewBox="0 0 20 20"><path d="M1 6 H5 L11 1 V19 L5 14 H1 Z" fill="#d0d0d0"/><path d="M14 5 Q17 10 14 15 M16.5 3 Q21 10 16.5 17" stroke="#d0d0d0" stroke-width="1.5" fill="none"/></svg>
<svg class="a" style="left:69px;top:876px;" width="13" height="13" viewBox="0 0 13 13"><circle cx="6.5" cy="6.5" r="5.5" fill="#d0d0d0"/></svg>
<svg class="a" style="left:89px;top:873px;" width="16" height="19" viewBox="0 0 16 19"><path d="M4 8 V5.5 A4 4 0 0 1 12 5.5 V8" fill="none" stroke="#d0d0d0" stroke-width="2"/><rect x="2" y="8" width="12" height="10" fill="#d0d0d0"/><circle cx="8" cy="12.5" r="1.8" fill="#474747"/></svg>
<div class="a" style="left:117px;top:873px;width:1px;height:17px;background:#3a3a3a;"></div>
<svg class="a" style="left:136px;top:871px;" width="24" height="24" viewBox="0 0 24 24"><path d="M3 13 L13 3 L21 3 L21 11 L11 21 Z" fill="#d0d0d0"/><circle cx="16.5" cy="7.5" r="2" fill="#474747"/></svg>
<div class="a" style="left:164px;top:873px;width:1px;height:17px;background:#3a3a3a;"></div>
<div class="t" style="left:173px;top:877.0px;font-size:13px;color:#a8a8a8;">#</div>
<div class="a" style="left:212px;top:873px;width:1px;height:17px;background:#3a3a3a;"></div>
<div class="t" style="left:221px;top:876.5px;font-size:13.6px;color:#b0b0b0;">Source Name</div>
<div class="a" style="left:462px;top:873px;width:1px;height:17px;background:#3a3a3a;"></div>
<svg class="a" style="left:469px;top:873px;" width="20" height="18" viewBox="0 0 20 18"><path d="M2 9 A8 7 0 0 1 18 9 Z" fill="#d0d0d0"/><path d="M10 9 V14 M4 14 H16" stroke="#d0d0d0" stroke-width="2"/></svg>
<svg class="a" style="left:492px;top:874px;" width="16" height="16" viewBox="0 0 16 16"><circle cx="8" cy="8" r="3.5" fill="none" stroke="#d0d0d0" stroke-width="1.6"/><path d="M8 0.5 V3 M8 13 V15.5 M0.5 8 H3 M13 8 H15.5 M2.5 2.5 L4.3 4.3 M11.7 11.7 L13.5 13.5 M13.5 2.5 L11.7 4.3 M4.3 11.7 L2.5 13.5" stroke="#d0d0d0" stroke-width="1.4"/></svg>
<svg class="a" style="left:514px;top:873px;" width="18" height="18" viewBox="0 0 18 18"><path d="M2 2 L16 16" stroke="#d0d0d0" stroke-width="2" stroke-dasharray="2.5 1.5"/></svg>
<div class="t" style="left:537px;top:871px;font-size:20px;font-style:italic;font-family:'Liberation Serif',serif;color:#d0d0d0">fx</div>
<svg class="a" style="left:559px;top:873px;" width="20" height="18" viewBox="0 0 20 18"><rect x="1" y="1" width="18" height="16" fill="none" stroke="#d0d0d0" stroke-width="1.5"/><path d="M5 1 V17 M15 1 V17 M5 6 H15 M5 12 H15" stroke="#d0d0d0" stroke-width="1.3"/></svg>
<svg class="a" style="left:582px;top:872px;" width="20" height="20" viewBox="0 0 20 20"><circle cx="8" cy="13" r="6" fill="#8a8a8a" stroke="#b0b0b0" stroke-width="1.2"/><circle cx="12" cy="8" r="6" fill="#aaa" stroke="#d0d0d0" stroke-width="1.3"/></svg>
<svg class="a" style="left:604px;top:873px;" width="19" height="19" viewBox="0 0 19 19"><circle cx="9.5" cy="9.5" r="8" fill="#222" stroke="#d0d0d0" stroke-width="1.5"/><path d="M3.8 15.2 A8 8 0 0 1 15.2 3.8 Z" fill="#d0d0d0"/></svg>
<svg class="a" style="left:626px;top:872px;" width="20" height="21" viewBox="0 0 20 21"><path d="M2 6 L10 2 L18 6 L18 15 L10 19 L2 15 Z" fill="none" stroke="#d0d0d0" stroke-width="1.5"/><path d="M2 6 L10 10 L18 6 M10 10 V19" stroke="#d0d0d0" stroke-width="1.3" fill="none"/></svg>
<div class="a" style="left:14px;top:895px;width:678px;height:2px;background:#2e2e2e;"></div>
<div class="a" style="left:14px;top:897px;width:678px;height:141px;background:#434343;"></div>
<div class="a" style="left:219px;top:1014px;width:244px;height:24px;background:#676767;"></div>
<div class="a" style="left:88px;top:913px;width:22px;height:21px;background:#393939;"></div>
<div class="a" style="left:88px;top:964px;width:22px;height:21px;background:#393939;"></div>
<div class="a" style="left:88px;top:1015px;width:22px;height:21px;background:#393939;"></div>
<div class="a" style="left:150px;top:897px;width:100px;height:10px;overflow:hidden"><div class="t" style="left:24px;top:-9px;font-size:17px;color:#d4d4d4">Masks</div></div>
<svg class="a" style="left:149px;top:897px;" width="12" height="9" viewBox="0 0 12 9"><path d="M1 0 L11 0 L6 8 Z" fill="#e0e0e0"/></svg>
<svg class="a" style="left:174px;top:917px;" width="13" height="12" viewBox="0 0 13 12"><path d="M0.5 1 L12.5 1 L6.5 11.5 Z" fill="#e8e8e8"/></svg>
<div class="a" style="left:198px;top:915.5px;width:15px;height:15px;background:#c9c3f0;"></div>
<div class="t" style="left:224px;top:915.6px;font-size:17px;color:#d2d2d2;">Mask 1</div>
<div class="t" style="left:481px;top:915.6px;font-size:17px;color:#e0e0e0;">Add</div>
<svg class="a" style="left:543px;top:918px;" width="15" height="10" viewBox="0 0 15 10"><path d="M1 1 L14 1 L7.5 9 Z" fill="#e8e8e8"/></svg>
<div class="a" style="left:572px;top:913px;width:18px;height:21px;background:#3d3d3d;"></div>
<div class="t" style="left:596px;top:915.6px;font-size:17px;color:#c8c8c8;">Inverted</div>
<svg class="a" style="left:24px;top:942px;" width="12" height="14" viewBox="0 0 12 14"><path d="M11 1 L1 7 L11 13 Z" fill="#d8d8d8"/></svg>
<svg class="a" style="left:45px;top:941px;" width="16" height="16" viewBox="0 0 16 16"><path d="M8 1.5 L14.5 8 L8 14.5 L1.5 8 Z" fill="none" stroke="#e0e0e0" stroke-width="1.5"/></svg>
<svg class="a" style="left:71px;top:943px;" width="9" height="12" viewBox="0 0 9 12"><path d="M1 1 L8 6 L1 11 Z" fill="#5c5c5c"/></svg>
<svg class="a" style="left:221px;top:940px;" width="18" height="18" viewBox="0 0 18 18"><circle cx="9" cy="10" r="6.5" fill="none" stroke="#3ec0e0" stroke-width="2"/><path d="M9 10 L11.5 7" stroke="#3ec0e0" stroke-width="1.8"/><path d="M6 1.5 H12 M3 4 L1.5 5.5" stroke="#3ec0e0" stroke-width="1.8"/></svg>
<svg class="a" style="left:247px;top:940px;" width="20" height="18" viewBox="0 0 20 18"><path d="M2 1 V16 H19" stroke="#e0e0e0" stroke-width="1.8" fill="none"/><path d="M2 12 L7 5 L11 11 L15 8 L18 13" stroke="#e0e0e0" stroke-width="1.5" fill="none"/></svg>
<div class="t" style="left:277px;top:941.6px;font-size:17px;color:#d2d2d2;">Mask Path</div>
<div class="t" style="left:471px;top:942.5px;font-size:16px;color:#3fb8e8;">Shape...</div>
<svg class="a" style="left:174px;top:969px;" width="13" height="12" viewBox="0 0 13 12"><path d="M0.5 1 L12.5 1 L6.5 11.5 Z" fill="#e8e8e8"/></svg>
<div class="a" style="left:198px;top:967.5px;width:15px;height:15px;background:#f4dcbc;"></div>
<div class="t" style="left:224px;top:967.6px;font-size:17px;color:#d2d2d2;">Mask 2</div>
<div class="t" style="left:481px;top:967.6px;font-size:17px;color:#e0e0e0;">Add</div>
<svg class="a" style="left:543px;top:970px;" width="15" height="10" viewBox="0 0 15 10"><path d="M1 1 L14 1 L7.5 9 Z" fill="#e8e8e8"/></svg>
<div class="a" style="left:572px;top:965px;width:18px;height:21px;background:#3d3d3d;"></div>
<div class="t" style="left:596px;top:967.6px;font-size:17px;color:#c8c8c8;">Inverted</div>
<svg class="a" style="left:24px;top:993px;" width="12" height="14" viewBox="0 0 12 14"><path d="M11 1 L1 7 L11 13 Z" fill="#d8d8d8"/></svg>
<svg class="a" style="left:45px;top:992px;" width="16" height="16" viewBox="0 0 16 16"><path d="M8 1.5 L14.5 8 L8 14.5 L1.5 8 Z" fill="none" stroke="#e0e0e0" stroke-width="1.5"/></svg>
<svg class="a" style="left:71px;top:994px;" width="9" height="12" viewBox="0 0 9 12"><path d="M1 1 L8 6 L1 11 Z" fill="#5c5c5c"/></svg>
<svg class="a" style="left:221px;top:991px;" width="18" height="18" viewBox="0 0 18 18"><circle cx="9" cy="10" r="6.5" fill="none" stroke="#3ec0e0" stroke-width="2"/><path d="M9 10 L11.5 7" stroke="#3ec0e0" stroke-width="1.8"/><path d="M6 1.5 H12 M3 4 L1.5 5.5" stroke="#3ec0e0" stroke-width="1.8"/></svg>
<svg class="a" style="left:247px;top:991px;" width="20" height="18" viewBox="0 0 20 18"><path d="M2 1 V16 H19" stroke="#e0e0e0" stroke-width="1.8" fill="none"/><path d="M2 12 L7 5 L11 11 L15 8 L18 13" stroke="#e0e0e0" stroke-width="1.5" fill="none"/></svg>
<div class="t" style="left:277px;top:992.6px;font-size:17px;color:#d2d2d2;">Mask Path</div>
<div class="t" style="left:471px;top:993.5px;font-size:16px;color:#3fb8e8;">Shape...</div>
<svg class="a" style="left:175px;top:1019px;" width="12" height="14" viewBox="0 0 12 14"><path d="M1 1 L11.5 7 L1 13 Z" fill="#e8e8e8"/></svg>
<div class="a" style="left:198px;top:1018.5px;width:15px;height:15px;background:#8c8cf2;"></div>
<div class="t" style="left:224px;top:1018.6px;font-size:17px;color:#d2d2d2;">Mask 3</div>
<div class="t" style="left:481px;top:1018.6px;font-size:17px;color:#e0e0e0;">Add</div>
<svg class="a" style="left:543px;top:1021px;" width="15" height="10" viewBox="0 0 15 10"><path d="M1 1 L14 1 L7.5 9 Z" fill="#e8e8e8"/></svg>
<div class="a" style="left:572px;top:1016px;width:18px;height:21px;background:#3d3d3d;"></div>
<div class="t" style="left:596px;top:1018.6px;font-size:17px;color:#c8c8c8;">Inverted</div>
<div class="a" style="left:691px;top:866px;width:2px;height:172px;background:#2a2a2a;"></div>
<div class="a" style="left:14px;top:1038px;width:1892px;height:2px;background:#262626;"></div>
<div class="a" style="left:14px;top:1040px;width:1892px;height:26px;background:#2e2e2e;"></div>
<div class="a" style="left:14px;top:1040px;width:841px;height:26px;background:#3a3a3a;"></div>
<svg class="a" style="left:21px;top:1042px;" width="22" height="22" viewBox="0 0 22 22"><rect x="1.5" y="1.5" width="11" height="11" fill="#1e6f88" stroke="#4cd0f0" stroke-width="1.4"/><rect x="5" y="5" width="11" height="11" fill="#1e6f88" stroke="#4cd0f0" stroke-width="1.4"/><rect x="8.5" y="8.5" width="11" height="11" fill="#2c8aa8" stroke="#5ad8f8" stroke-width="1.4"/></svg>
<svg class="a" style="left:50px;top:1043px;" width="20" height="20" viewBox="0 0 20 20"><circle cx="7" cy="7" r="5.5" fill="none" stroke="#e0e0e0" stroke-width="1.6"/><rect x="8" y="8" width="10" height="9" fill="#3a3a3a" stroke="#e0e0e0" stroke-width="1.6"/></svg>
<svg class="a" style="left:76px;top:1043px;" width="18" height="20" viewBox="0 0 18 20"><path d="M5 2 Q2 2 2 5 V8 L0.5 10 L2 12 V15 Q2 18 5 18 M13 2 Q16 2 16 5 V8 L17.5 10 L16 12 V15 Q16 18 13 18" stroke="#e0e0e0" stroke-width="1.8" fill="none"/><rect x="7.5" y="2" width="3" height="16" fill="#888"/></svg>
<div class="t" style="left:481px;top:1046.3px;font-size:15px;color:#e4e4e4;">Toggle Switches / Modes</div>
<svg class="a" style="left:699px;top:1048px;" width="16" height="10" viewBox="0 0 16 10"><path d="M1 9 L8 2 L15 9 Z" fill="#d0d0d0"/></svg>
<svg class="a" style="left:731px;top:1044px;" width="18" height="20" viewBox="0 0 18 20"><path d="M2 8 L9 1 L16 8 V19 H2 Z" fill="#a8a8a8"/></svg>
<div class="a" style="left:752px;top:1053px;width:52px;height:1px;background:#444;"></div>
<svg class="a" style="left:818px;top:1045px;" width="30" height="16" viewBox="0 0 30 16"><path d="M1 14 L8 5 L12 9 L16 3 L22 10 L25 7 L29 14 Z" fill="none" stroke="#d0d0d0" stroke-width="1.5"/><path d="M1 14 H29" stroke="#d0d0d0" stroke-width="1.5"/></svg>
<div class="a" style="left:693px;top:815px;width:1188px;height:51px;background:#3d3d3d;"></div>
<div class="a" style="left:693px;top:822px;width:1187px;height:15px;background:#2a2a2a;"></div>
<div class="a" style="left:702px;top:823px;width:1168px;height:12px;background:#8f8f8f;"></div>
<svg class="a" style="left:692px;top:822px;" width="12" height="14" viewBox="0 0 12 14"><path d="M11 1 H6 Q1 1 1 7 Q1 13 6 13 H11 Z" fill="#48c8ec" stroke="#1c6a80" stroke-width="1"/><path d="M6 4 V10 M8.5 4 V10" stroke="#1c6a80" stroke-width="1"/></svg>
<svg class="a" style="left:1869px;top:822px;" width="12" height="14" viewBox="0 0 12 14"><path d="M1 1 H6 Q11 1 11 7 Q11 13 6 13 H1 Z" fill="#48c8ec" stroke="#1c6a80" stroke-width="1"/><path d="M3.5 4 V10 M6 4 V10" stroke="#1c6a80" stroke-width="1"/></svg>
<div class="a" style="left:1346px;top:823px;width:3px;height:12px;background:#9ad8d0;"></div>
<div class="a" style="left:693px;top:840px;width:40px;height:18px;overflow:hidden"><div class="t" style="left:-4px;top:3px;font-size:13.5px;color:#c8c8c8">0:00s</div></div>
<div class="a" style="left:703px;top:858px;width:2px;height:7px;background:#bdbdbd;"></div>
<div class="t" style="left:808px;top:842.6px;font-size:13.5px;color:#c8c8c8;">01s</div>
<div class="a" style="left:820px;top:858px;width:2px;height:7px;background:#bdbdbd;"></div>
<div class="t" style="left:924px;top:842.6px;font-size:13.5px;color:#c8c8c8;">02s</div>
<div class="a" style="left:937px;top:858px;width:2px;height:7px;background:#bdbdbd;"></div>
<div class="t" style="left:1041px;top:842.6px;font-size:13.5px;color:#c8c8c8;">03s</div>
<div class="a" style="left:1053px;top:858px;width:2px;height:7px;background:#bdbdbd;"></div>
<div class="t" style="left:1158px;top:842.6px;font-size:13.5px;color:#c8c8c8;">04s</div>
<div class="a" style="left:1169px;top:858px;width:2px;height:7px;background:#bdbdbd;"></div>
<div class="t" style="left:1274px;top:842.6px;font-size:13.5px;color:#c8c8c8;">05s</div>
<div class="a" style="left:1286px;top:858px;width:2px;height:7px;background:#bdbdbd;"></div>
<div class="t" style="left:1390px;top:842.6px;font-size:13.5px;color:#c8c8c8;">06s</div>
<div class="a" style="left:1403px;top:858px;width:2px;height:7px;background:#bdbdbd;"></div>
<div class="t" style="left:1507px;top:842.6px;font-size:13.5px;color:#c8c8c8;">07s</div>
<div class="a" style="left:1519px;top:858px;width:2px;height:7px;background:#bdbdbd;"></div>
<div class="t" style="left:1624px;top:842.6px;font-size:13.5px;color:#c8c8c8;">08s</div>
<div class="a" style="left:1635px;top:858px;width:2px;height:7px;background:#bdbdbd;"></div>
<div class="t" style="left:1740px;top:842.6px;font-size:13.5px;color:#c8c8c8;">09s</div>
<div class="a" style="left:1752px;top:858px;width:2px;height:7px;background:#bdbdbd;"></div>
<div class="t" style="left:1856px;top:842.6px;font-size:13.5px;color:#c8c8c8;">10s</div>
<div class="a" style="left:1869px;top:858px;width:2px;height:7px;background:#bdbdbd;"></div>
<div class="a" style="left:693px;top:865px;width:1188px;height:2px;background:#262626;"></div>
<div class="a" style="left:702px;top:867px;width:1168px;height:23px;background:#868686;"></div>
<svg class="a" style="left:692px;top:866px;" width="12" height="25" viewBox="0 0 12 25"><path d="M11 1 H6 Q2 1 2 5 V20 Q2 24 6 24 H11 Z" fill="#48c8ec" stroke="#1c6a80" stroke-width="1"/><path d="M6 4 V21" stroke="#1c6a80" stroke-width="1.2"/></svg>
<svg class="a" style="left:1869px;top:866px;" width="12" height="25" viewBox="0 0 12 25"><path d="M1 1 H6 Q10 1 10 5 V20 Q10 24 6 24 H1 Z" fill="#48c8ec" stroke="#1c6a80" stroke-width="1"/><path d="M5.5 4 V21" stroke="#1c6a80" stroke-width="1.2"/></svg>
<svg class="a" style="left:1883px;top:869px;" width="22" height="24" viewBox="0 0 22 24"><path d="M2 2 H20 V14 L11 22 L2 14 Z" fill="#6a6a6a" stroke="#e0e0e0" stroke-width="1.8"/></svg>
<div class="a" style="left:693px;top:890px;width:1188px;height:7px;background:#2e2e2e;"></div>
<div class="a" style="left:1318px;top:891px;width:178px;height:5px;background:#44d044;"></div>
<div class="a" style="left:693px;top:897px;width:1178px;height:141px;background:#474747;"></div>
<div class="a" style="left:703px;top:897px;width:1168px;height:141px;background:#515151;"></div>
<div class="a" style="left:703px;top:897px;width:1168px;height:13px;background:#4a4a4a;"></div>
<div class="a" style="left:703px;top:910px;width:1168px;height:2px;background:#3a3a3a;"></div>
<div class="a" style="left:703px;top:935px;width:1168px;height:2px;background:#3a3a3a;"></div>
<div class="a" style="left:703px;top:961px;width:1168px;height:2px;background:#3a3a3a;"></div>
<div class="a" style="left:703px;top:986px;width:1168px;height:2px;background:#3a3a3a;"></div>
<div class="a" style="left:703px;top:1012px;width:1168px;height:2px;background:#3a3a3a;"></div>
<div class="a" style="left:1871px;top:897px;width:8px;height:141px;background:#555555;"></div>
<div class="a" style="left:1879px;top:897px;width:27px;height:141px;background:#353535;"></div>
<svg class="a" style="left:1881px;top:901px;" width="24" height="22" viewBox="0 0 24 22"><circle cx="8" cy="8" r="6" fill="#aaa" stroke="#ddd" stroke-width="1.3"/><path d="M3 20 L8 11 L13 20 Z" fill="#444" stroke="#ddd" stroke-width="1.5"/><rect x="11" y="7" width="10" height="9" fill="#444" stroke="#ddd" stroke-width="1.5"/></svg>
<div class="a" style="left:1881px;top:923px;width:22px;height:13px;background:#2c2c2c;"></div>
<div class="a" style="left:1881px;top:936px;width:22px;height:53px;background:#3a3a3a;"></div>
<div class="a" style="left:1881px;top:989px;width:22px;height:49px;background:#2c2c2c;"></div>
<div class="a" style="left:1880px;top:1040px;width:26px;height:26px;background:#3a3a3a;"></div>
<svg class="a" style="left:1260px;top:942px;" width="16" height="16" viewBox="0 0 16 16"><path d="M8 1 L15 8 L8 15 L1 8 Z" fill="#e6e6e6" stroke="#333" stroke-width="0.8"/><path d="M8 3 L8 13 L3 8 Z" fill="#b0b0b0"/></svg>
<svg class="a" style="left:1311px;top:942px;" width="16" height="16" viewBox="0 0 16 16"><path d="M8 1 L15 8 L8 15 L1 8 Z" fill="#e6e6e6" stroke="#333" stroke-width="0.8"/><path d="M8 3 L8 13 L3 8 Z" fill="#b0b0b0"/></svg>
<svg class="a" style="left:1260px;top:993px;" width="16" height="16" viewBox="0 0 16 16"><path d="M8 1 L15 8 L8 15 L1 8 Z" fill="#e6e6e6" stroke="#333" stroke-width="0.8"/><path d="M8 3 L8 13 L3 8 Z" fill="#b0b0b0"/></svg>
<svg class="a" style="left:1311px;top:993px;" width="16" height="16" viewBox="0 0 16 16"><path d="M8 1 L15 8 L8 15 L1 8 Z" fill="#e6e6e6" stroke="#333" stroke-width="0.8"/><path d="M8 3 L8 13 L3 8 Z" fill="#b0b0b0"/></svg>
<div class="a" style="left:1347px;top:864px;width:2px;height:175px;background:#9ad8f0;"></div>
<svg class="a" style="left:1337px;top:843px;" width="22" height="23" viewBox="0 0 22 23"><path d="M1 1 H21 V12 L11 22 L1 12 Z" fill="#5cd0f4" stroke="#173848" stroke-width="1.2"/><path d="M8 5 V9 M11 5 V9 M14 5 V9 M11 12 V20 M8 12 H14" stroke="#173848" stroke-width="1.2"/></svg>
<svg class="a" style="left:1340px;top:897px;" width="16" height="15" viewBox="0 0 16 15"><path d="M3 1 H13 M3 14 H13" stroke="#c8e8f0" stroke-width="1.6"/><rect x="5.5" y="1" width="5" height="13" fill="#b8dde8"/></svg>
<svg class="a" style="left:1340px;top:914px;" width="16" height="21" viewBox="0 0 16 21"><path d="M3 1 H13 M3 20 H13" stroke="#c8e8f0" stroke-width="1.6"/><rect x="5.5" y="1" width="5" height="19" fill="#b8dde8"/></svg>
<svg class="a" style="left:1340px;top:965px;" width="16" height="21" viewBox="0 0 16 21"><path d="M3 1 H13 M3 20 H13" stroke="#c8e8f0" stroke-width="1.6"/><rect x="5.5" y="1" width="5" height="19" fill="#b8dde8"/></svg>
<svg class="a" style="left:1340px;top:1016px;" width="16" height="21" viewBox="0 0 16 21"><path d="M3 1 H13 M3 20 H13" stroke="#c8e8f0" stroke-width="1.6"/><rect x="5.5" y="1" width="5" height="19" fill="#b8dde8"/></svg>
<svg class="a" style="left:860px;top:1018px;" width="200" height="52" viewBox="0 0 200 52"><g opacity="0.9"><path d="M45 14 A20 20 0 1 0 48 40" stroke="#9c9c9c" stroke-width="4.5" fill="none"/><circle cx="30" cy="28" r="13" fill="#262a30"/><path d="M20 36 L26 20 L32 34 L37 24 L44 36" stroke="#2f7ec8" stroke-width="4" fill="none" stroke-linejoin="round"/><path d="M75 15 Q74 32 62 43" stroke="#8e8e8e" stroke-width="5" fill="none"/><path d="M75 26 Q80 37 90 43" stroke="#8e8e8e" stroke-width="5" fill="none"/><path d="M110 15 Q109 32 97 43" stroke="#8e8e8e" stroke-width="5" fill="none"/><path d="M110 26 Q115 37 125 43" stroke="#8e8e8e" stroke-width="5" fill="none"/><path d="M132 17 H156 M144 14 V27 M134 22 H154 M129 27 H159" stroke="#8e8e8e" stroke-width="3.5" fill="none"/><path d="M141 29 L148 32 L137 36 H152 M144 36 V44 M137 39 L132 43 M151 39 L156 43" stroke="#8e8e8e" stroke-width="3.5" fill="none"/><path d="M164 23 H177 M171 15 V44 M171 25 L165 38 M172 27 L177 33" stroke="#8e8e8e" stroke-width="3.8" fill="none"/><path d="M178 24 H194 M188 15 V43 L184 41 M188 27 L178 39" stroke="#8e8e8e" stroke-width="3.8" fill="none"/></g></svg>
</body></html>
